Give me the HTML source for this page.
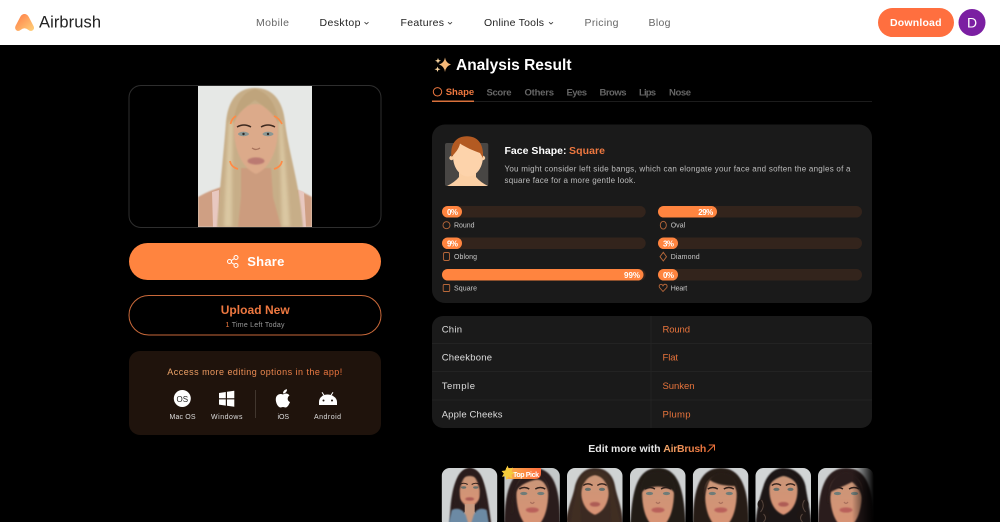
<!DOCTYPE html>
<html lang="en">
<head>
<meta charset="utf-8">
<title>Airbrush Face Shape Analysis</title>
<style>
html,body{margin:0;padding:0;background:#000;width:1000px;height:522px;overflow:hidden}
svg{display:block}
text{font-family:"Liberation Sans",sans-serif}
.b{font-weight:700}
</style>
</head>
<body>
<svg xmlns="http://www.w3.org/2000/svg" width="1000" height="522" viewBox="0 0 1000 522">
<defs>
<linearGradient id="logo" x1="0" y1="0" x2="1" y2="1"><stop offset="0" stop-color="#ff7a45"/><stop offset="1" stop-color="#ffd27a"/></linearGradient>
<linearGradient id="acc" x1="0" y1="0" x2="1" y2="0"><stop offset="0" stop-color="#eda56a"/><stop offset="1" stop-color="#e9703a"/></linearGradient>
<linearGradient id="fade" x1="0" y1="0" x2="1" y2="0"><stop offset="0" stop-color="#000" stop-opacity="0"/><stop offset="1" stop-color="#000"/></linearGradient>
<linearGradient id="badge" x1="0" y1="0" x2="1" y2="0"><stop offset="0" stop-color="#f9b04a"/><stop offset="1" stop-color="#ff6d3f"/></linearGradient>
<linearGradient id="skin" x1="0" y1="0" x2="0" y2="1"><stop offset="0" stop-color="#c99678"/><stop offset="1" stop-color="#d99274"/></linearGradient>
<filter id="s1"><feGaussianBlur stdDeviation="0.7"/></filter>
<filter id="s2"><feGaussianBlur stdDeviation="1.6"/></filter>
<clipPath id="tc"><rect x="0" y="0" width="55.500" height="60" rx="8"/></clipPath>
<clipPath id="pc"><rect x="198" y="86" width="114" height="141"/></clipPath>
<clipPath id="ac"><rect x="445" y="136" width="44" height="50"/></clipPath>
<g id="face">
  <path d="M12 24C12 12 20 8 28 8S44 12 44 24C44 40 40 56 28 62C16 56 12 40 12 24Z" fill="url(#skin)" filter="url(#s1)"/>
  <path d="M15 21Q20 18 25 21M31 21Q36 18 41 21" stroke="#33221c" stroke-width="1.400" fill="none"/>
  <ellipse cx="19.500" cy="25.500" rx="3.600" ry="1.600" fill="#6f7c78"/><ellipse cx="36.500" cy="25.500" rx="3.600" ry="1.600" fill="#6f7c78"/>
  <path d="M26 34Q28 37 30 34" stroke="#a86f5c" stroke-width="1.200" fill="none"/>
  <ellipse cx="28" cy="42" rx="6.500" ry="2.600" fill="#b9605a" filter="url(#s1)"/>
</g>
<g id="smallface">
  <path d="M16 20C16 12 22 8 28 8S40 12 40 20C40 30 35 37 28 39C21 37 16 30 16 20Z" fill="url(#skin)" filter="url(#s1)"/>
  <path d="M18 16.500Q22 14 26 16.500M30 16.500Q34 14 38 16.500" stroke="#33221c" stroke-width="1.100" fill="none"/>
  <ellipse cx="22" cy="19.500" rx="2.600" ry="1.200" fill="#66706c"/><ellipse cx="34" cy="19.500" rx="2.600" ry="1.200" fill="#66706c"/>
  <ellipse cx="28" cy="31" rx="4.500" ry="1.800" fill="#ad5c55" filter="url(#s1)"/>
</g>
</defs>

<!-- Header -->
<rect width="1000" height="45" fill="#fff"/>
<path d="M24.500 14C22.500 14 21.200 15.200 20.200 17L15.500 26C14 29.500 17.500 32.500 20.500 30Q24.500 26.500 28.500 30C31.500 32.500 35.500 29.500 33.500 26L28.800 17C27.800 15.200 26.500 14 24.500 14Z" fill="url(#logo)"/>
<text x="39" y="27.500" font-size="16.500" textLength="62" lengthAdjust="spacing" fill="#222">Airbrush</text>
<g font-size="10.500">
<text x="256" y="26" textLength="33" fill="#666">Mobile</text>
<text x="319.500" y="26" textLength="41" fill="#222">Desktop</text>
<text x="400.500" y="26" textLength="43.500" fill="#222">Features</text>
<text x="484" y="26" textLength="60" fill="#222">Online Tools</text>
<text x="584.500" y="26" textLength="34" fill="#666">Pricing</text>
<text x="648.500" y="26" textLength="22" fill="#666">Blog</text>
</g>
<path d="M364.500 22.200L366.500 24L368.500 22.200M448 22.200L450 24L452 22.200M549 22.200L551 24L553 22.200" stroke="#444" stroke-width="0.900" fill="none"/>
<rect x="878" y="8" width="76" height="29" rx="14.500" fill="#ff6f3f"/>
<text x="890" y="26" class="b" font-size="10.500" textLength="51.500" fill="#fff">Download</text>
<circle cx="972" cy="22.500" r="13.500" fill="#7b1fa2"/>
<text x="972" y="27.500" font-size="14" text-anchor="middle" fill="#fff">D</text>

<!-- Left: photo -->
<rect x="129" y="85.500" width="252" height="142" rx="12" fill="#000" stroke="#2e2e2e"/>
<g clip-path="url(#pc)">
  <rect x="198" y="86" width="114" height="141" fill="#e6e8e6"/>
  <path d="M198 197Q210 190 225 186L285 186Q300 190 312 197V227H198Z" fill="#cf9f83" filter="url(#s1)"/>
  <path d="M212 192L213 227H219L219 190ZM298 190L300 227H306L304 192Z" fill="#e8c8c0"/>
  <path d="M255 88C236 88 228 102 226 122C224 150 220 185 217 227H303C300 185 288 150 285 122C283 102 274 88 255 88Z" fill="#c7ae88" filter="url(#s1)"/>
  <path d="M229 122C227 150 225 190 224 227H232C232 190 232 150 233 122ZM282 122C284 150 288 190 290 227H282C281 190 280 150 279 122Z" fill="#dac7a2" filter="url(#s2)"/>
  <path d="M241 168L271 168L273 197L281 227H238L241 197Z" fill="#cc9c7e" filter="url(#s1)"/>
  <path d="M234 128C234 113 244 104 256 104S278 113 278 128C278 150 270 168 256 174C242 168 234 150 234 128Z" fill="#dcaa8a" filter="url(#s1)"/>
  <path d="M255 89C243 92 236 102 233 124C238 112 247 106 255 100C263 106 273 112 279 124C276 102 267 92 255 89Z" fill="#bfa47c" filter="url(#s1)"/>
  <path d="M255 89V100" stroke="#8f7551" stroke-width="1.500" filter="url(#s1)"/>
  <path d="M237 127Q244 123 251 127M261 127Q268 123 275 127" stroke="#3e2a20" stroke-width="1.500" fill="none"/>
  <ellipse cx="243.500" cy="134" rx="5.500" ry="2.200" fill="#8a9794"/><ellipse cx="268" cy="134" rx="5.500" ry="2.200" fill="#8a9794"/>
  <circle cx="243.500" cy="134" r="1.200" fill="#2c2a28"/><circle cx="268" cy="134" r="1.200" fill="#2c2a28"/>
  <path d="M252 148Q256 151 260 148" stroke="#a8735c" stroke-width="1.300" fill="none"/>
  <ellipse cx="256" cy="161" rx="8.500" ry="3.600" fill="#bb7a72" filter="url(#s1)"/>
  <g stroke="#ff8a45" stroke-width="1.700" fill="none">
    <path d="M236 116Q232 118 230.500 124"/><path d="M274 116Q279 118 282 124"/>
    <path d="M230 161Q231 167 238 169"/><path d="M282 161Q281 167 274 169"/>
  </g>
</g>

<!-- Left: buttons -->
<rect x="129" y="243" width="252" height="37" rx="18.500" fill="#ff843f"/>
<g stroke="#fff" stroke-width="1" fill="none"><circle cx="229.500" cy="261.500" r="2"/><circle cx="236" cy="257.500" r="2"/><circle cx="236" cy="265.500" r="2"/><path d="M231.300 260.500L234.200 258.700M231.300 262.500L234.200 264.300"/></g>
<text x="247.300" y="266" class="b" font-size="13" textLength="37" fill="#fff">Share</text>
<rect x="129" y="295.500" width="252" height="39.500" rx="19.700" fill="#000" stroke="#c9693a"/>
<text x="220.700" y="314" class="b" font-size="12" textLength="69" fill="#ee7840">Upload New</text>
<text x="225.500" y="327" font-size="7" textLength="59" fill="#999"><tspan fill="#ee7840">1</tspan> Time Left Today</text>

<!-- Left: app card -->
<rect x="129" y="351" width="252" height="84" rx="11" fill="#1f130c"/>
<text x="167.300" y="375" font-size="9" textLength="175" fill="url(#acc)">Access more editing options in the app!</text>
<circle cx="182.300" cy="398.500" r="8.500" fill="#fff"/>
<text x="182.300" y="401.800" font-size="8" text-anchor="middle" fill="#222">OS</text>
<path d="M219 393L225.800 392V398.200H219ZM227 391.800L234.300 390.800V398.200H227ZM219 399.400H225.800V405.600L219 404.600ZM227 399.400H234.300V406.800L227 405.800Z" fill="#fff"/>
<path d="M283 394.500C285 393 288 393 289.500 395.500C287 397 287 401 290 402C289 404.500 287.500 407.500 285.500 407.500C284.500 407.500 284 407 283 407C282 407 281.500 407.500 280.500 407.500C278 407.500 275.500 402.500 275.800 399C276 395 279.500 393 283 394.500ZM283 393.500C283 391 284.800 389.500 287 389.300C287.200 391.500 285.500 393.500 283 393.500Z" fill="#fff"/>
<path d="M319 405V402C319 397.500 323 394.500 327.500 394.500S337 397.500 337 402V405H319Z" fill="#fff"/>
<path d="M322 392.300L324.500 396M333 392.300L330.500 396" stroke="#fff" stroke-width="1"/>
<circle cx="323.500" cy="400.500" r="1" fill="#1f130c"/><circle cx="332" cy="400.500" r="1" fill="#1f130c"/>
<rect x="255.200" y="390" width="0.800" height="28" fill="#4a3f38"/>
<g font-size="7" fill="#ddd">
<text x="169.500" y="419" textLength="26">Mac OS</text>
<text x="211" y="419" textLength="31.500">Windows</text>
<text x="277.500" y="419" textLength="11.500">iOS</text>
<text x="314" y="419" textLength="27">Android</text>
</g>

<!-- Right: title and tabs -->
<path d="M445 57.500Q445.800 63 451 64.500Q445.800 66 445 72Q444.200 66 439 64.500Q444.200 63 445 57.500Z" fill="#f6b878"/>
<path d="M438 58L438.800 60L441 60.800L438.800 61.600L438 63.500L437.200 61.600L435 60.800L437.200 60ZM437.500 66.500L438.300 68.500L440.500 69.300L438.300 70L437.500 72L436.700 70L434.500 69.300L436.700 68.500Z" fill="#fbd6a0"/>
<text x="456" y="70" class="b" font-size="15.500" textLength="115.500" fill="#fff">Analysis Result</text>
<circle cx="437.500" cy="91.800" r="4.200" fill="none" stroke="#ee7840"/>
<text x="445.700" y="95" class="b" font-size="9.500" textLength="28.500" fill="#ee7840">Shape</text>
<g class="b" font-size="9.500" fill="#666">
<text x="486.500" y="95.500" textLength="25">Score</text>
<text x="524.500" y="95.500" textLength="29.500">Others</text>
<text x="566.500" y="95.500" textLength="20.500">Eyes</text>
<text x="599.500" y="95.500" textLength="27">Brows</text>
<text x="639" y="95.500" textLength="17">Lips</text>
<text x="669" y="95.500" textLength="22">Nose</text>
</g>
<rect x="432" y="101" width="440" height="1" fill="#1c1c1c"/>
<rect x="432" y="100.500" width="42" height="1.500" fill="#d9713b"/>

<!-- Right: result card -->
<rect x="432" y="124.500" width="440" height="178.500" rx="13" fill="#1a1a1a"/>
<rect x="445" y="143" width="43.300" height="43" rx="2" fill="#484644"/>
<g clip-path="url(#ac)">
  <path d="M459 168H476V177Q480 182 488 186H447Q455 182 459 177Z" fill="#fbcfa4"/>
  <path d="M453 156C453 146 459 142 468 142S483 146 483 156C483 168 476 176.500 468 176.500S453 168 453 156Z" fill="#fdd3ab"/>
  <circle cx="451.500" cy="158" r="2.200" fill="#fbcfa4"/><circle cx="483" cy="158" r="2.200" fill="#fbcfa4"/>
  <path d="M451.500 157C450 144 456 136.300 467 136.300C477 136.300 484 143 483 158L480 153C474 151 465 147 460 143.500C459 149 455 153 451.500 157Z" fill="#b35a22"/>
</g>
<text x="504.500" y="154" class="b" font-size="10.500" textLength="62" fill="#fff">Face Shape:</text>
<text x="569" y="154" class="b" font-size="10.500" textLength="36" fill="#ee7840">Square</text>
<text x="504.500" y="171.500" font-size="8" textLength="346" fill="#bdbdbd">You might consider left side bangs, which can elongate your face and soften the angles of a</text>
<text x="504.500" y="183" font-size="8" textLength="131" fill="#bdbdbd">square face for a more gentle look.</text>

<!-- Bars -->
<g fill="#33241c">
<rect x="442" y="206" width="203.700" height="11.500" rx="5.700"/><rect x="658" y="206" width="204" height="11.500" rx="5.700"/>
<rect x="442" y="237.500" width="203.700" height="11.500" rx="5.700"/><rect x="658" y="237.500" width="204" height="11.500" rx="5.700"/>
<rect x="442" y="269" width="203.700" height="11.500" rx="5.700"/><rect x="658" y="269" width="204" height="11.500" rx="5.700"/>
</g>
<g fill="#ff843f">
<rect x="442" y="206" width="20" height="11.500" rx="5.700"/><rect x="658" y="206" width="59" height="11.500" rx="5.700"/>
<rect x="442" y="237.500" width="20" height="11.500" rx="5.700"/><rect x="658" y="237.500" width="20" height="11.500" rx="5.700"/>
<rect x="442" y="269" width="201.500" height="11.500" rx="5.700"/><rect x="658" y="269" width="20" height="11.500" rx="5.700"/>
</g>
<g class="b" font-size="8" fill="#fff">
<text x="447" y="214.800" textLength="11">0%</text>
<text x="698.300" y="214.800" textLength="15">29%</text>
<text x="447" y="246.300" textLength="11">9%</text>
<text x="663" y="246.300" textLength="11">3%</text>
<text x="624" y="277.800" textLength="16">99%</text>
<text x="663" y="277.800" textLength="11">0%</text>
</g>
<g fill="none" stroke="#b8683a" stroke-width="0.900">
<circle cx="446.500" cy="225.200" r="3.500"/>
<ellipse cx="663.300" cy="225.200" rx="3" ry="3.900"/>
<rect x="443.500" y="252.500" width="6" height="8" rx="1.500"/>
<path d="M663.300 252.300L666.500 256.700L663.300 261L660 256.700Z"/>
<rect x="443.200" y="284.500" width="6.500" height="7" rx="1"/>
<path d="M663 291.500L659.500 287.500C658 284.500 661.800 283 663 285.800C664.500 283 668.200 284.500 666.800 287.500Z"/>
</g>
<g font-size="7" fill="#c8c8c8">
<text x="454" y="227.500" textLength="20.500">Round</text>
<text x="670.700" y="227.500" textLength="14.500">Oval</text>
<text x="454" y="259" textLength="23">Oblong</text>
<text x="670.700" y="259" textLength="29">Diamond</text>
<text x="454" y="290.500" textLength="23">Square</text>
<text x="670.700" y="290.500" textLength="16.500">Heart</text>
</g>

<!-- Table -->
<rect x="432" y="316" width="440" height="112" rx="11" fill="#1a1a1a"/>
<path d="M432 343.500H872M432 371.500H872M432 400H872M651 316V428" stroke="#232323"/>
<g font-size="9.500" fill="#dedede">
<text x="441.700" y="332.500" textLength="20.300">Chin</text>
<text x="441.700" y="360.500" textLength="50.300">Cheekbone</text>
<text x="441.700" y="389" textLength="33.300">Temple</text>
<text x="441.700" y="417.500" textLength="60.800">Apple Cheeks</text>
</g>
<g font-size="9.500" fill="#e8743c">
<text x="662.500" y="332.500" textLength="27.500">Round</text>
<text x="662.500" y="360.500" textLength="15.500">Flat</text>
<text x="662.500" y="389" textLength="32">Sunken</text>
<text x="662.500" y="417.500" textLength="28">Plump</text>
</g>

<!-- Edit more -->
<text x="588.300" y="451.800" class="b" font-size="10.500" textLength="72.200" fill="#e6e6e6">Edit more with</text>
<text x="663.300" y="451.800" class="b" font-size="10.500" textLength="43" fill="url(#acc)">AirBrush</text>
<path d="M707.500 452L714 445.500M708.800 445H714.500V450.500" stroke="#e9703a" stroke-width="1" fill="none"/>

<!-- Thumbnails -->
<g transform="translate(441.700,468)" clip-path="url(#tc)">
  <rect width="56" height="60" fill="#cfd2d3"/>
  <path d="M8 60C8 30 12 2 28 0C44 2 46 30 50 60Z" fill="#2a1e1b" filter="url(#s1)"/>
  <use href="#smallface"/>
  <path d="M28 0C16 2 14 12 13 34L8 60H19L18 22C20 12 24 6 28 4C32 6 36 12 38 22L38 60H49L43 30C42 12 40 2 28 0Z" fill="#2a1e1b" filter="url(#s1)"/>
  <path d="M23 36H33V44L38 50L28 56L18 50L23 44Z" fill="#c89a80"/>
  <path d="M6 60L10 42Q19 38 24 47L28 60ZM48 60L45 42Q36 38 32 47L28 60Z" fill="#6c8aa4" filter="url(#s1)"/>
</g>
<g transform="translate(504.300,468)" clip-path="url(#tc)">
  <rect width="56" height="60" fill="#c4c8c9"/>
  <path d="M0 60C0 20 8 0 29 0C50 0 56 20 56 60Z" fill="#2b1f1b" filter="url(#s1)"/>
  <use href="#face"/>
  <path d="M9 44C9 22 13 17 30 12C38 10 42 16 45 26C45 12 38 5 29 5C15 5 6 20 7 46Z" fill="#2b1f1b" filter="url(#s1)"/>
</g>
<g transform="translate(567,468)" clip-path="url(#tc)">
  <rect width="56" height="60" fill="#d0d3d3"/>
  <path d="M-2 60C0 40 6 30 8 18C12 4 20 0 28 0C38 0 46 6 48 18C50 30 56 40 56 60Z" fill="#3a2a22" filter="url(#s1)"/>
  <use href="#smallface" transform="translate(-4.800,-4) scale(1.170,1.300)"/>
  <path d="M28 3C18 3 11 10 10 24C8 34 4 44 4 60H14C14 44 12 30 15 20C18 11 23 8 28 7C33 8 38 11 41 20C44 30 44 44 44 60H54C52 44 47 34 46 22C44 9 37 3 28 3Z" fill="#3f2d24" filter="url(#s1)"/>
</g>
<g transform="translate(630,468)" clip-path="url(#tc)">
  <rect width="56" height="60" fill="#cdd0d1"/>
  <path d="M0 60C2 30 4 0 28 0C52 0 54 30 56 60Z" fill="#241a18" filter="url(#s1)"/>
  <use href="#face"/>
  <path d="M10 26C10 10 18 4 28 4S46 10 46 26L42 22Q28 15 14 22Z" fill="#241a18" filter="url(#s1)"/>
</g>
<g transform="translate(692.800,468)" clip-path="url(#tc)">
  <rect width="56" height="60" fill="#cfd2d3"/>
  <path d="M0 60C0 28 4 0 28 0C52 0 56 28 56 60Z" fill="#271c19" filter="url(#s1)"/>
  <use href="#face"/>
  <path d="M11 36C8 18 18 5 28 5C38 5 46 10 46 28L42 18C35 18 24 17 17 12C14 18 12 26 11 36Z" fill="#271c19" filter="url(#s1)"/>
</g>
<g transform="translate(755.500,468)" clip-path="url(#tc)">
  <rect width="56" height="60" fill="#d2d5d6"/>
  <path d="M0 60C0 46 4 30 8 18C12 5 20 0 28 0C40 0 48 8 50 18C52 32 56 46 56 60Z" fill="#1e1614" filter="url(#s1)"/>
  <use href="#smallface" transform="translate(-4.800,-4) scale(1.170,1.300)"/>
  <path d="M28 3C18 3 11 10 10 22C14 14 22 9 28 8C35 9 42 14 45 22C44 10 38 3 28 3Z" fill="#1e1614" filter="url(#s1)"/>
  <g fill="#1e1614"><circle cx="7" cy="36" r="5"/><circle cx="48" cy="36" r="5"/><circle cx="9" cy="47" r="5"/><circle cx="46" cy="47" r="5"/></g>
  <path d="M6 32Q10 38 5 44M49 32Q45 38 50 44M8 46Q12 50 8 54M47 46Q43 50 47 54" stroke="#58463d" fill="none"/>
</g>
<g transform="translate(818,468)" clip-path="url(#tc)">
  <rect width="56" height="60" fill="#cdd0d1"/>
  <path d="M0 60C0 28 4 0 28 0C52 0 56 28 56 60Z" fill="#2a1e1a" filter="url(#s1)"/>
  <use href="#face"/>
  <path d="M10 36C8 16 18 4 28 4C38 4 48 16 46 36C44 26 40 18 34 14C26 18 16 22 13 24Z" fill="#2a1e1a" filter="url(#s1)"/>
</g>
<rect x="852" y="466" width="22" height="56" fill="url(#fade)"/>

<!-- Top pick badge -->
<path d="M506 468H541V473Q541 479 535 479H506Z" fill="url(#badge)"/>
<text x="513" y="477" class="b" font-size="7" textLength="26" fill="#fff">Top Pick</text>
<path d="M507.500 465.500L509 469.300L513 467.500L511.500 471.500L515 473L511.300 474.800L512.500 478.500L508.500 476.800L506.500 480L505.500 476.300L502 476.800L503.800 473.500L501.500 471L505.200 470.500Z" fill="#f5cc3c"/>
</svg>
</body>
</html>
